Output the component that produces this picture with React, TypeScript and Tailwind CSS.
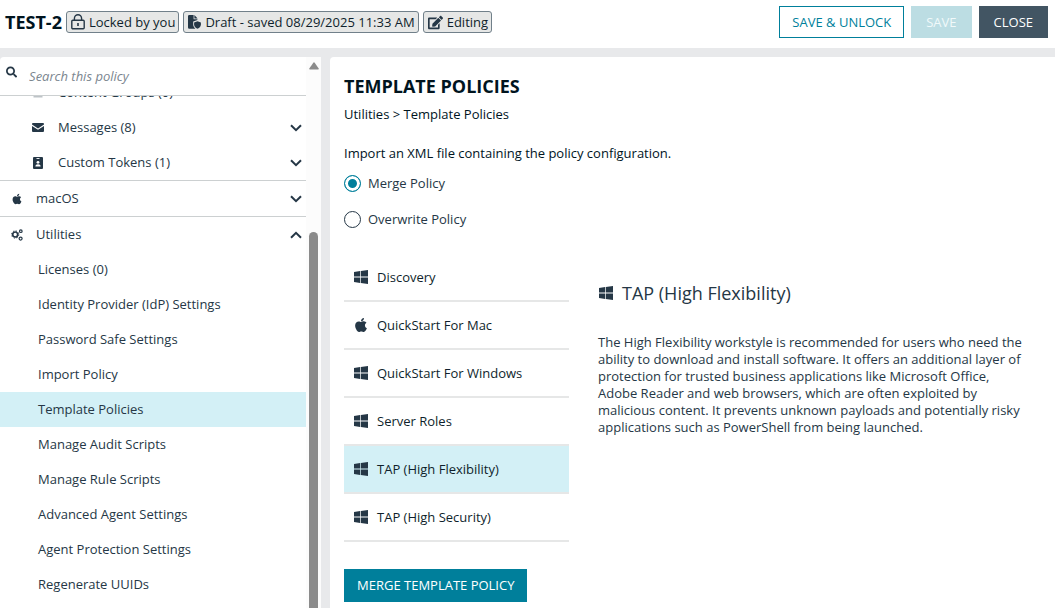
import { useState } from "react";
import type { ReactNode } from "react";
import { FaApple, FaEdit, FaSearch } from "react-icons/fa";
import clsx from "clsx";

type Template = { name: string; platform: "windows" | "mac"; description: string };

const TEMPLATES: Template[] = [
  { name: "Discovery", platform: "windows", description: "" },
  { name: "QuickStart For Mac", platform: "mac", description: "" },
  { name: "QuickStart For Windows", platform: "windows", description: "" },
  { name: "Server Roles", platform: "windows", description: "" },
  {
    name: "TAP (High Flexibility)",
    platform: "windows",
    description:
      "The High Flexibility workstyle is recommended for users who need the ability to download and install software. It offers an additional layer of protection for trusted business applications like Microsoft Office, Adobe Reader and web browsers, which are often exploited by malicious content. It prevents unknown payloads and potentially risky applications such as PowerShell from being launched.",
  },
  { name: "TAP (High Security)", platform: "windows", description: "" },
];

const UTILITIES = [
  "Licenses (0)",
  "Identity Provider (IdP) Settings",
  "Password Safe Settings",
  "Import Policy",
  "Template Policies",
  "Manage Audit Scripts",
  "Manage Rule Scripts",
  "Advanced Agent Settings",
  "Agent Protection Settings",
  "Regenerate UUIDs",
];

function WindowsIcon() {
  return (
    <svg viewBox="0 0 14 14" className="size-3.5" fill="currentColor">
      <path d="M0 1.900l6.100-.8v5.500H0Z" />
      <path d="M6.800 1L14 0v6.600H6.800Z" />
      <path d="M0 7.400h6.100v5.500L0 12.100Z" />
      <path d="M6.800 7.400H14V14l-7.200-1Z" />
    </svg>
  );
}

function LockIcon() {
  return (
    <svg viewBox="0 0 14 16" className="h-4 w-3.5" fill="none" stroke="currentColor" strokeWidth="1.4">
      <rect x="0.8" y="6.2" width="12.4" height="8.6" rx="1" />
      <path d="M3.4 6V4.4a3.6 3.6 0 0 1 7.2 0V6" />
      <path d="M7 9v3" strokeWidth="1.6" />
    </svg>
  );
}

function FileShieldIcon() {
  return (
    <svg viewBox="0 0 13 14" className="h-3.5 w-[13px]" fill="currentColor">
      <path d="M1.2 0H5.600v4.200h3.800v.8L5.200 6.600v3c0 1.700.9 3.200 2.200 4.200H1.2A1.2 1.2 0 0 1 0 12.600V1.200A1.200 1.200 0 0 1 1.200 0Z" />
      <path d="M6.400 0l3.200 3.400H6.400Z" />
      <path d="M9.500 6.200l3.400 1.300v2c0 1.900-1.300 3.500-3.400 4.300-2.100-.8-3.400-2.400-3.400-4.300v-2Z" />
    </svg>
  );
}

function MailIcon() {
  return (
    <svg viewBox="0 0 12 9" className="h-[9px] w-3" fill="currentColor">
      <path d="M1 0h10a1 1 0 0 1 1 1v.6L6 5.400 0 1.600V1a1 1 0 0 1 1-1Z" />
      <path d="M0 3l6 3.700L12 3v5a1 1 0 0 1-1 1H1a1 1 0 0 1-1-1Z" />
    </svg>
  );
}

function GroupIcon() {
  return (
    <svg viewBox="0 0 12 10" className="h-2.5 w-3" fill="currentColor">
      <path d="M1.500 0h9v7h-9Z" />
      <path d="M1.500 8h9v1.500h-9Z" fillOpacity="0.3" />
    </svg>
  );
}

function BadgeIcon() {
  return (
    <svg viewBox="0 0 10 12" className="h-3 w-2.5">
      <path
        d="M1 0h8a1 1 0 0 1 1 1v10a1 1 0 0 1-1 1H1a1 1 0 0 1-1-1V1a1 1 0 0 1 1-1Z"
        fill="currentColor"
      />
      <path d="M3.500 1.500h3" stroke="white" strokeWidth="0.9" />
      <circle cx="5" cy="5.300" r="1.400" fill="white" />
      <path d="M2.400 9.500c0-1.500 1-2.200 2.600-2.200s2.600.7 2.600 2.200Z" fill="white" />
    </svg>
  );
}

function CogsIcon() {
  return (
    <svg viewBox="0 0 12 12" className="h-3 w-3" fill="none" stroke="currentColor">
      <circle cx="4.200" cy="5.500" r="2.500" strokeWidth="1.700" />
      <circle cx="4.200" cy="5.500" r="3.600" strokeWidth="1" strokeDasharray="1.400 1.430" />
      <circle cx="9.800" cy="2.200" r="1.300" strokeWidth="1.200" />
      <circle cx="9.600" cy="9.600" r="1.500" strokeWidth="1.200" />
    </svg>
  );
}

function Chevron({ up }: { up?: boolean }) {
  return (
    <svg
      viewBox="0 0 12 8"
      className={clsx("h-2 w-3", up && "rotate-180")}
      fill="none"
      stroke="currentColor"
      strokeWidth="2"
    >
      <path d="M1 1.200l5 5 5-5" />
    </svg>
  );
}

function Chip({ icon, children }: { icon: ReactNode; children: ReactNode }) {
  return (
    <span className="flex h-[22px] items-center gap-1 whitespace-nowrap rounded-[3px] border border-[#71808a] bg-[#e6e7e6] pl-1 pr-[3px] text-[#253746]">
      {icon}
      <span className="text-[#0f1f2c]">{children}</span>
    </span>
  );
}

function NavGroup({
  icon,
  label,
  nested,
  leaf,
  open,
}: {
  icon: ReactNode;
  label: string;
  nested?: boolean;
  leaf?: boolean;
  open?: boolean;
}) {
  return (
    <button
      type="button"
      aria-expanded={leaf ? undefined : !!open}
      className={clsx("flex h-[35px] w-full items-center pr-1", nested ? "pl-8" : "pl-[11px]")}
    >
      <span className={clsx("flex w-3 justify-center", nested ? "mr-3.5" : "mr-[13px]")}>{icon}</span>
      <span className="flex-1 text-left">{label}</span>
      {!leaf && <Chevron up={open} />}
    </button>
  );
}

function PlatformIcon({ platform }: { platform: Template["platform"] }) {
  return (
    <span className="flex w-4 shrink-0 justify-center text-[#253746]">
      {platform === "mac" ? <FaApple size={16} /> : <WindowsIcon />}
    </span>
  );
}

function Header() {
  return (
    <header className="flex h-12 shrink-0 items-center justify-between bg-white pl-[5px] pr-[7px]">
      <div className="flex items-center gap-1 pb-1">
        <h1 className="text-[18px] font-bold leading-6 text-[#00141e]">TEST-2</h1>
        <Chip icon={<LockIcon />}>Locked by you</Chip>
        <Chip icon={<FileShieldIcon />}>Draft - saved 08/29/2025 11:33 AM</Chip>
        <Chip icon={<FaEdit size={15} />}>Editing</Chip>
      </div>
      <div className="flex gap-[7px] pb-1">
        <button type="button" className="h-8 border border-[#007f9b] px-3 text-[#007f9b]">
          SAVE &amp; UNLOCK
        </button>
        <button type="button" disabled className="h-8 bg-[#bcdde3] px-[15px] text-[#f1f9fa]">
          SAVE
        </button>
        <button type="button" className="h-8 bg-[#425563] px-[15px] text-white">
          CLOSE
        </button>
      </div>
    </header>
  );
}

function Sidebar() {
  return (
    <aside className="flex w-[321px] shrink-0 rounded-t-sm bg-white text-[#253746]">
      <div className="flex min-w-0 flex-1 flex-col">
        <label className="flex h-[39px] shrink-0 items-center border-b border-[#ccd0d1] pl-1.5">
          <FaSearch size={12} className="mb-2" />
          <input
            type="text"
            aria-label="Search this policy"
            placeholder="Search this policy"
            className="ml-3 w-full bg-transparent italic outline-none placeholder:text-[#7b868f]"
          />
        </label>
        <nav className="min-h-0 flex-1 overflow-hidden">
          {/* list is scrolled past its first entries */}
          <div className="-mt-[21px]">
            <NavGroup nested leaf icon={<GroupIcon />} label="Content Groups (0)" />
            <NavGroup nested icon={<MailIcon />} label="Messages (8)" />
            <NavGroup nested icon={<BadgeIcon />} label="Custom Tokens (1)" />
            <div className="border-y border-[#ccd0d1]">
              <NavGroup icon={<FaApple size={12} />} label="macOS" />
            </div>
            <NavGroup open icon={<CogsIcon />} label="Utilities" />
            <ul>
              {UTILITIES.map((item) => (
                <li key={item}>
                  <a
                    href="#"
                    className={clsx(
                      "flex h-[35px] items-center pl-[38px]",
                      item === "Template Policies" && "bg-[#d3f0f6]"
                    )}
                  >
                    {item}
                  </a>
                </li>
              ))}
            </ul>
          </div>
        </nav>
      </div>
      {/* scrollbar */}
      <div className="flex w-[15px] flex-col items-center bg-[#fcfcfc] pt-[5px]">
        <svg viewBox="0 0 10 8" className="h-2 w-2.5 shrink-0" fill="#8b8b8b">
          <path d="M4.300.8a.9.9 0 0 1 1.400 0L9.700 6.400c.4.6 0 1.100-.6 1.100H.9C.3 7.500-.1 7 .3 6.400Z" />
        </svg>
        <div className="mt-[162px] w-[9px] flex-1 rounded-t-full bg-[#8b8b8b]" />
      </div>
    </aside>
  );
}

function PolicyRadio({
  label,
  checked,
  onChange,
}: {
  label: string;
  checked: boolean;
  onChange: () => void;
}) {
  return (
    <label className="flex h-9 items-center gap-[7px] text-[#253746]">
      <input
        type="radio"
        name="import-mode"
        checked={checked}
        onChange={onChange}
        className="size-[17px] appearance-none rounded-full border border-[#253746] bg-white checked:border-[#007f9b] checked:bg-[#007f9b] checked:shadow-[inset_0_0_0_3px_white]"
      />
      {label}
    </label>
  );
}

export default function App() {
  const [mode, setMode] = useState("merge");
  const [selected, setSelected] = useState("TAP (High Flexibility)");
  const current = TEMPLATES.find((t) => t.name === selected) ?? TEMPLATES[0];

  return (
    <div className="flex h-screen flex-col overflow-hidden bg-[#e8e9eb] font-['Open_Sans',sans-serif] text-[13px] leading-[17px] text-[#00141e]">
      <Header />
      <div className="flex min-h-0 flex-1 gap-[9px] pt-[9px]">
        <Sidebar />
        <main className="min-w-0 flex-1 overflow-hidden rounded-tl-sm bg-white pl-3.5 pr-7 pt-[17px]">
          <h2 className="text-[18px] font-bold leading-6">TEMPLATE POLICIES</h2>
          <p className="mt-2">Utilities &gt; Template Policies</p>
          <p className="mt-[22px]">Import an XML file containing the policy configuration.</p>
          <div className="mt-[3px]">
            <PolicyRadio
              label="Merge Policy"
              checked={mode === "merge"}
              onChange={() => setMode("merge")}
            />
            <PolicyRadio
              label="Overwrite Policy"
              checked={mode === "overwrite"}
              onChange={() => setMode("overwrite")}
            />
          </div>

          <div className="mt-[17px] flex gap-[29px]">
            <ul className="w-[225px] shrink-0">
              {TEMPLATES.map((t) => (
                <li key={t.name} className="border-b-2 border-[#e6e7e7]">
                  <button
                    type="button"
                    onClick={() => setSelected(t.name)}
                    className={clsx(
                      "flex h-[46px] w-full items-center gap-2 pl-[9px] text-left text-[#0f1f2c]",
                      t.name === selected && "bg-[#d3f0f6]"
                    )}
                  >
                    <PlatformIcon platform={t.platform} />
                    {t.name}
                  </button>
                </li>
              ))}
            </ul>
            <section className="min-w-0 flex-1 pt-[27px] text-[#253746]">
              <h3 className="flex items-center gap-2 text-[18px] leading-6">
                <PlatformIcon platform={current.platform} />
                {current.name}
              </h3>
              <p className="mt-[29px]">{current.description}</p>
            </section>
          </div>

          <button type="button" className="mt-[27px] h-[33px] bg-[#007f9b] px-[13px] text-white">
            MERGE TEMPLATE POLICY
          </button>
        </main>
      </div>
    </div>
  );
}
